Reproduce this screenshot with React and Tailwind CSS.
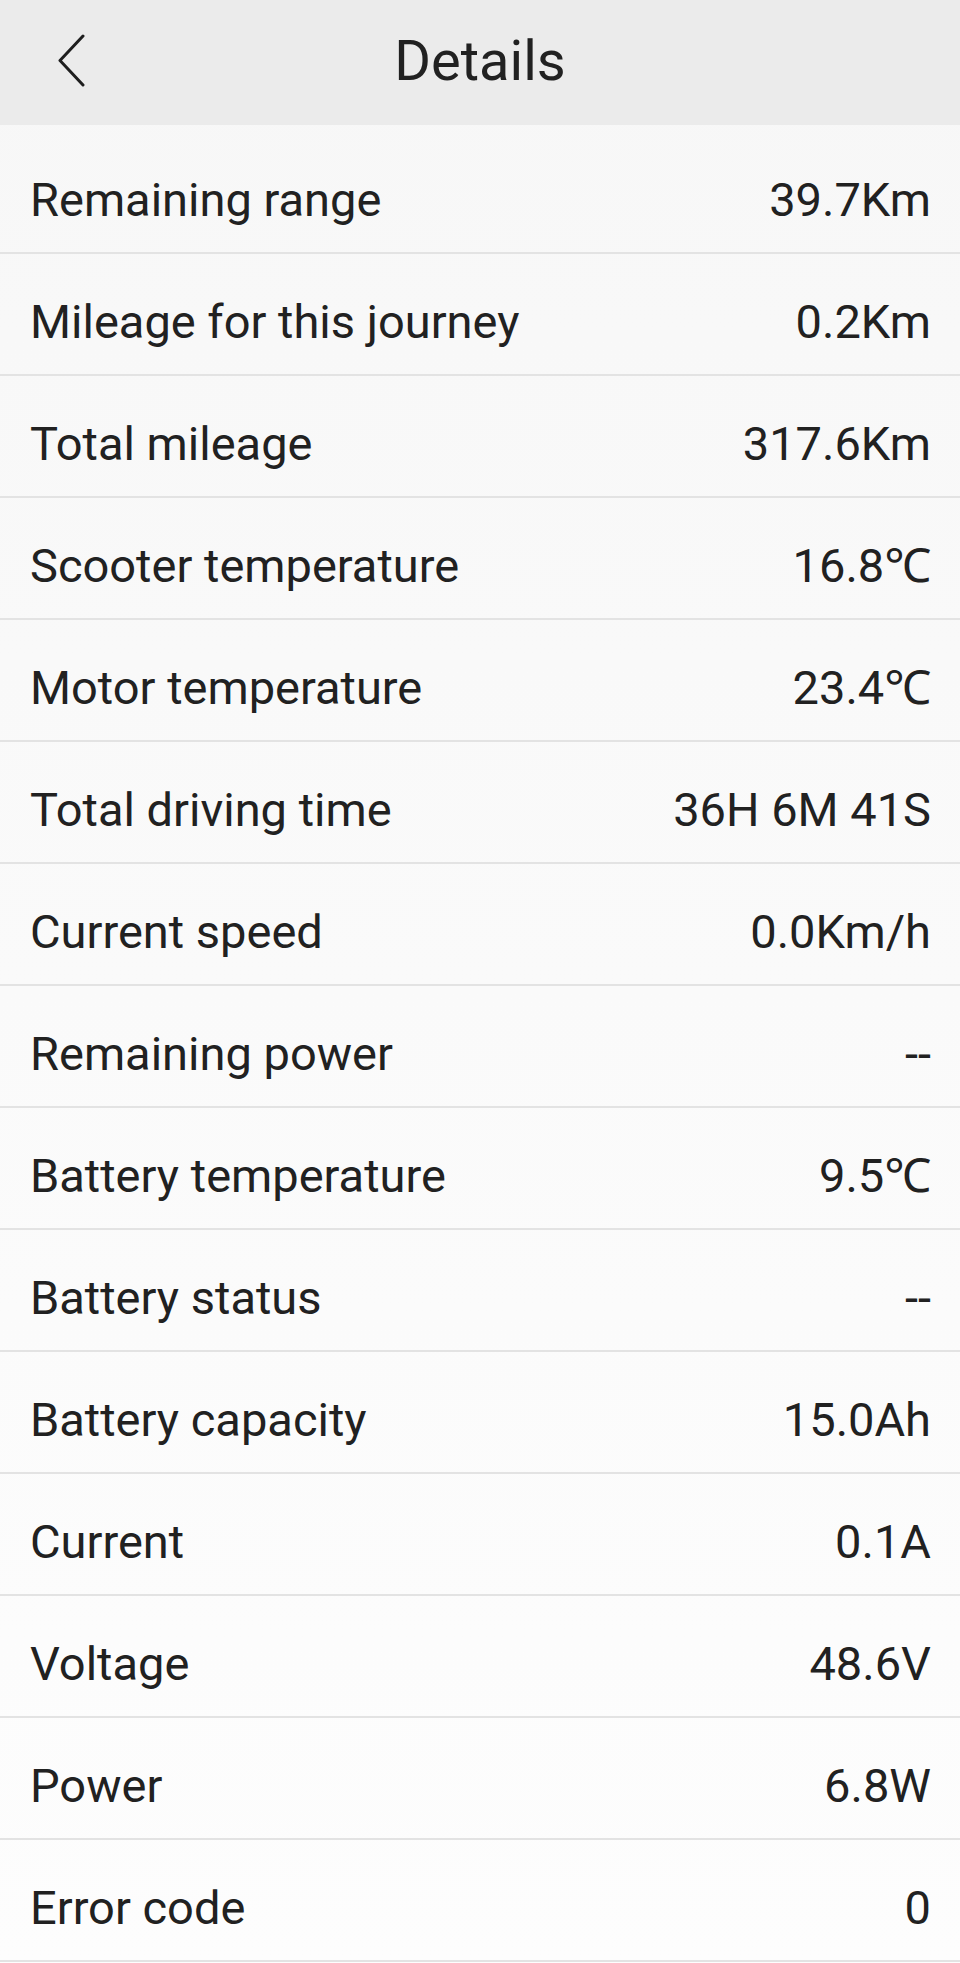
import React from "react";

const rows = [
  ["Remaining range", "39.7Km"],
  ["Mileage for this journey", "0.2Km"],
  ["Total mileage", "317.6Km"],
  ["Scooter temperature", "16.8℃"],
  ["Motor temperature", "23.4℃"],
  ["Total driving time", "36H 6M 41S"],
  ["Current speed", "0.0Km/h"],
  ["Remaining power", "--"],
  ["Battery temperature", "9.5℃"],
  ["Battery status", "--"],
  ["Battery capacity", "15.0Ah"],
  ["Current", "0.1A"],
  ["Voltage", "48.6V"],
  ["Power", "6.8W"],
  ["Error code", "0"],
];

export default function App() {
  return (
    <div
      className="w-[960px] h-[1963px] overflow-hidden bg-gradient-to-b from-[#f7f7f7] to-[#fdfdfd] text-[#212121]"
      style={{ fontFamily: "Roboto, 'Noto Sans', sans-serif" }}
    >
      <header className="relative h-[125px] bg-[#ebebeb] flex items-center justify-center">
        <button className="absolute left-[56px] top-[34px] w-[32px] h-[54px] flex items-center justify-center">
          <svg width="30" height="54" viewBox="0 0 30 54" fill="none">
            <path d="M26 2 L3 26.5 L26 51" stroke="#1e1e1e" strokeWidth="3" strokeLinecap="round" strokeLinejoin="round" />
          </svg>
        </button>
        <h1 className="text-[56px] leading-none font-normal pb-[3px]">Details</h1>
      </header>
      <div className="pt-[7px]">
        {rows.map(([label, value]) => (
          <div
            key={label}
            className="h-[122px] border-b-2 border-[#e3e3e3] flex items-center justify-between pl-[30px] pr-[29px] pt-[14px] text-[47px] leading-none"
          >
            <span>{label}</span>
            <span>{value}</span>
          </div>
        ))}
      </div>
    </div>
  );
}
